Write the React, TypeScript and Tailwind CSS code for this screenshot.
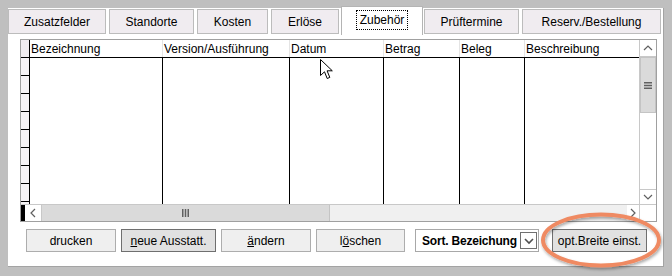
export default function App() {
  const tabs = [
    { label: "Zusatzfelder", w: "w-[98px]", mr: "mr-[3px]" },
    { label: "Standorte", w: "w-[85px]", mr: "mr-[3px]" },
    { label: "Kosten", w: "w-[71px]", mr: "mr-[3px]" },
    { label: "Erlöse", w: "w-[68px]", mr: "mr-[2px]" },
    { label: "Zubehör", w: "w-[82px]", mr: "mr-[1px]", active: true },
    { label: "Prüftermine", w: "w-[95px]", mr: "mr-[3px]" },
    { label: "Reserv./Bestellung", w: "w-[139px]", mr: "" },
  ];

  const cols = [
    { label: "Bezeichnung", w: "w-[133px]" },
    { label: "Version/Ausführung", w: "w-[127px]" },
    { label: "Datum", w: "w-[94px]" },
    { label: "Betrag", w: "w-[76px]" },
    { label: "Beleg", w: "w-[65px]" },
  ];

  return (
    <div
      className="relative w-[672px] h-[276px] overflow-hidden bg-[#bfbfbf] pt-[8px] pl-[8px] text-[12px] text-black"
      style={{ fontFamily: '"Liberation Sans", Arial, sans-serif' }}
    >
      <div className="w-[656px] h-[259px] bg-white border-r border-b border-[#a3a3a3]">
        {/* TABS */}
        <div className="flex items-end h-[26px]">
          {tabs.map((t) =>
            t.active ? (
              <div
                key={t.label}
                className={`${t.w} ${t.mr} h-[29px] -mb-[1px] flex items-start justify-center pt-[3px] bg-white border border-b-0 border-[#b4b4b4]`}
              >
                <span className="px-[3px] leading-[18px] border border-dotted border-black">
                  {t.label}
                </span>
              </div>
            ) : (
              <div
                key={t.label}
                className={`${t.w} ${t.mr} h-[25px] flex items-center justify-center bg-[#f0ecf0] border border-[#bcbcbc]`}
              >
                {t.label}
              </div>
            )
          )}
        </div>

        {/* GRID */}
        <div className="ml-[12px] mt-[5px] w-[637px] h-[183px] border border-[#a0a0a0] flex flex-col">
          <div className="flex h-[164px]">
            <div className="w-[618px] flex flex-col">
              {/* header */}
              <div className="flex h-[18px] border-b border-black">
                <div className="w-[9px] bg-[#f0ecf0] border-r border-black" />
                {cols.map((c) => (
                  <div
                    key={c.label}
                    className={`${c.w} pl-[1px] leading-[18px] border-r border-[#e4e4e4] bg-white`}
                  >
                    {c.label}
                  </div>
                ))}
                <div className="flex-1 pl-[1px] leading-[18px] bg-white">Beschreibung</div>
              </div>
              {/* body */}
              <div className="flex flex-1">
                <div className="w-[9px] bg-[#f6f3f6] border-r border-black flex flex-col">
                  {Array.from({ length: 8 }).map((_, i) => (
                    <div key={i} className="h-[18px] border-b border-black" />
                  ))}
                </div>
                {cols.map((c) => (
                  <div key={c.label} className={`${c.w} border-r border-black`} />
                ))}
                <div className="flex-1" />
              </div>
            </div>
            {/* vertical scrollbar */}
            <div className="w-[17px] flex flex-col border-l border-[#c8c8c8] bg-[#f0f0f0]">
              <div className="h-[17px] bg-white flex items-center justify-center border-b border-[#c8c8c8]">
                <Chevron dir="up" />
              </div>
              <div className="h-[56px] bg-[#dadada] border border-[#c4c4c4] flex items-center justify-center">
                <Grip vertical={false} />
              </div>
              <div className="flex-1 bg-white" />
              <div className="h-[15px] bg-white flex items-center justify-center border-t border-[#c8c8c8]">
                <Chevron dir="down" />
              </div>
            </div>
          </div>
          {/* horizontal scrollbar */}
          <div className="flex h-[17px] border-t border-[#c8c8c8]">
            <div className="w-[4px] bg-black" />
            <div className="w-[17px] bg-white flex items-center justify-center border-r border-[#c8c8c8]">
              <Chevron dir="left" />
            </div>
            <div className="w-[288px] bg-[#dadada] border-r border-[#c4c4c4] flex items-center justify-center">
              <Grip vertical />
            </div>
            <div className="flex-1 bg-[#f0f0f0]" />
            <div className="w-[13px] bg-white flex items-center justify-center border-r border-[#c8c8c8]">
              <Chevron dir="right" />
            </div>
            <div className="w-[16px] bg-white" />
          </div>
        </div>

        {/* BUTTONS */}
        <div className="flex items-center ml-[18px] mt-[7px] h-[23px]">
          <Btn w="w-[90px]">drucken</Btn>
          <Btn w="w-[95px] ml-[5px]" focused>
            <u>n</u>eue Ausstatt.
          </Btn>
          <Btn w="w-[90px] ml-[5px]">
            <u>ä</u>ndern
          </Btn>
          <Btn w="w-[89px] ml-[5px]">
            l<u>ö</u>schen
          </Btn>
          <div className="ml-[10px] w-[124px] h-[23px] bg-white border border-[#a8a8a8] flex items-center pl-[6px] pr-[1px]">
            <span className="flex-1 font-bold text-[12px] tracking-[-0.2px]">Sort. Bezeichung</span>
            <div className="w-[17px] h-[17px] border border-[#707070] bg-white flex items-center justify-center">
              <Chevron dir="down" dark />
            </div>
          </div>
          <Btn w="w-[95px] ml-[13px]" focused>
            opt.Breite einst.
          </Btn>
        </div>
      </div>

      {/* highlight ellipse */}
      <svg className="absolute left-0 top-0 pointer-events-none" width="672" height="276">
        <defs>
          <filter id="sh" x="-20%" y="-30%" width="140%" height="160%">
            <feDropShadow dx="1" dy="2" stdDeviation="1.6" floodColor="#000" floodOpacity="0.35" />
          </filter>
        </defs>
        <ellipse cx="601" cy="240" rx="58" ry="25.5" fill="none" stroke="#ef8a62" strokeWidth="4" filter="url(#sh)" />
      </svg>

      {/* mouse pointer */}
      <svg className="absolute left-[320px] top-[59px]" width="14" height="22" viewBox="0 0 14 22">
        <path
          d="M0.5 0.5 L0.5 16.5 L4.5 12.8 L7.2 19.5 L9.8 18.4 L7.1 11.8 L12.3 11.8 Z"
          fill="#fff"
          stroke="#000"
          strokeWidth="1"
          strokeLinejoin="miter"
        />
      </svg>
    </div>
  );
}

function Btn({ w, focused, children }: any) {
  return (
    <div
      className={`${w} h-[23px] flex items-center justify-center border ${
        focused ? "bg-[#e1e1e1] border-[#6f6f6f]" : "bg-[#efefef] border-[#adadad]"
      }`}
    >
      <span>{children}</span>
    </div>
  );
}

function Chevron({ dir, dark }: any) {
  const d =
    dir === "up"
      ? "M1 6 L5 2 L9 6"
      : dir === "down"
      ? "M1 2 L5 6 L9 2"
      : dir === "left"
      ? "M6 1 L2 5 L6 9"
      : "M2 1 L6 5 L2 9";
  const horiz = dir === "up" || dir === "down";
  return (
    <svg width={horiz ? 10 : 8} height={horiz ? 8 : 10} viewBox={horiz ? "0 0 10 8" : "0 0 8 10"}>
      <path d={d} fill="none" stroke={dark ? "#505050" : "#606060"} strokeWidth={dark ? 1.6 : 1.2} />
    </svg>
  );
}

function Grip({ vertical }: any) {
  return vertical ? (
    <svg width="7" height="8" viewBox="0 0 7 8">
      <rect x="0" y="0" width="1.5" height="8" fill="#606060" />
      <rect x="2.75" y="0" width="1.5" height="8" fill="#606060" />
      <rect x="5.5" y="0" width="1.5" height="8" fill="#606060" />
    </svg>
  ) : (
    <svg width="8" height="7" viewBox="0 0 8 7">
      <rect x="0" y="0" width="8" height="1.5" fill="#606060" />
      <rect x="0" y="2.75" width="8" height="1.5" fill="#606060" />
      <rect x="0" y="5.5" width="8" height="1.5" fill="#606060" />
    </svg>
  );
}
